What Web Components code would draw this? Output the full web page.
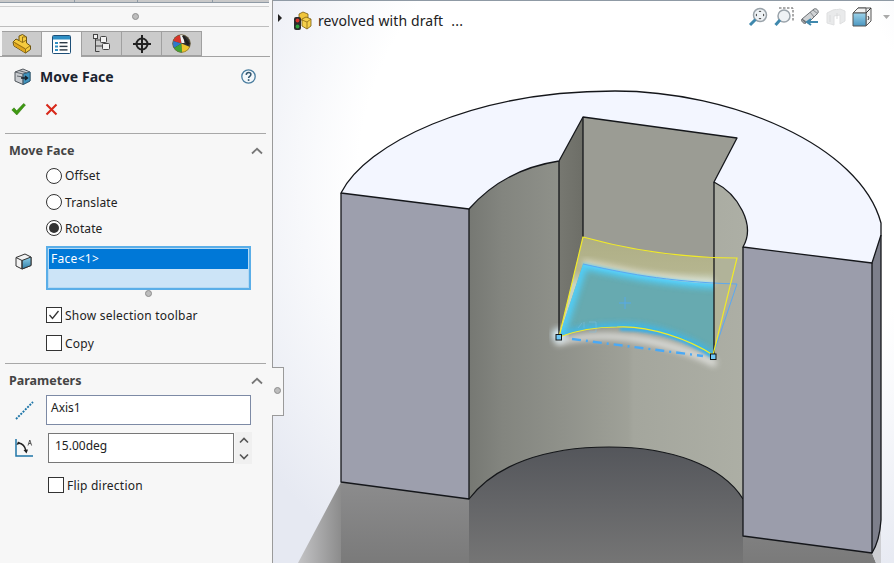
<!DOCTYPE html>
<html>
<head>
<meta charset="utf-8">
<title>Move Face</title>
<style>
  html, body { margin: 0; height: 100%; overflow: hidden; background: #fff; }
  body { font-family: "Noto Sans", "Open Sans", sans-serif; font-size: 12px; color: #222; }
</style>
</head>
<body>
<cad-app>
  <pm-panel slot="panel">
    <pm-tabs></pm-tabs>
    <pm-header title="Move Face"></pm-header>
    <pm-group title="Move Face" style="height:229px">
      <pm-radio label="Offset" style="margin-left:46px;height:27px"></pm-radio>
      <pm-radio label="Translate" style="margin-left:46px;height:26px"></pm-radio>
      <pm-radio label="Rotate" checked style="margin-left:46px;height:31px;align-items:flex-start;padding-top:5px;box-sizing:border-box"></pm-radio>
      <pm-listbox value="Face&lt;1&gt;"></pm-listbox>
      <pm-check label="Show selection toolbar" checked style="margin:11px 0 0 46px;height:28px"></pm-check>
      <pm-check label="Copy" style="margin-left:46px;height:28px"></pm-check>
    </pm-group>
    <pm-group title="Parameters" plain>
      <pm-field icon="axis" value="Axis1"></pm-field>
      <pm-spin value="15.00deg"></pm-spin>
      <pm-check label="Flip direction" style="margin:13px 0 0 48px;height:18px"></pm-check>
    </pm-group>
    <pm-flyout></pm-flyout>
  </pm-panel>
  <cad-view slot="view">
    <cad-crumb name="revolved with draft"></cad-crumb>
    <cad-tools></cad-tools>
  </cad-view>
</cad-app>

<script>
class CadApp extends HTMLElement {
  constructor() {
    super();
    this.attachShadow({ mode: 'open' });
    this.shadowRoot.innerHTML = `
      <style>
        :host { display: flex; width: 894px; height: 563px; overflow: hidden; }
        ::slotted([slot=panel]) { flex: 0 0 272px; }
        ::slotted([slot=view]) { flex: 1; }
      </style>
      <slot name="panel"></slot>
      <slot name="view"></slot>
    `;
  }
}

class PmPanel extends HTMLElement {
  constructor() {
    super();
    this.attachShadow({ mode: 'open' });
    this.shadowRoot.innerHTML = `
      <style>
        :host {
          display: flex; flex-direction: column; position: relative; box-sizing: content-box;
          background: #f7f7f7; border-right: 1px solid #9a9a9a; z-index: 2;
        }
        .top { height: 27px; box-sizing: border-box; border-bottom: 1px solid #bdbdbd; margin-right: 3px; position: relative; }
        .edge { height: 2px; background: #c9c9c9; border-bottom: 1px solid #8f9aa5; display: flex; }
        .edge i { width: 1px; background: #8f9aa5; margin-left: 74px; }
        .edge i + i { margin-left: 62px; }
        .edge i + i + i { margin-left: 74px; }
        .rule { height: 1px; background: #cfcfcf; margin-top: 3px; }
        .dot {
          width: 5px; height: 5px; border-radius: 50%; background: #bdbdbd; border: 1px solid #8e8e8e;
          position: absolute; left: 132px; top: 13px;
        }
      </style>
      <div class="top">
        <div class="edge"><i></i><i></i><i></i></div>
        <div class="rule"></div>
        <div class="dot"></div>
      </div>
      <slot></slot>
    `;
  }
}

class PmTabs extends HTMLElement {
  constructor() {
    super();
    this.attachShadow({ mode: 'open' });
    this.shadowRoot.innerHTML = `
      <style>
        :host {
          display: flex; height: 26px; margin-top: 4px; padding-left: 2px; margin-right: 2px;
          box-sizing: border-box; border-bottom: 1px solid #a3a3a3;
        }
        .tab {
          width: 40px; height: 25px; box-sizing: border-box; background: #cbcbcb;
          border: 1px solid #a0a0a0; border-left-width: 0;
          display: flex; align-items: center; justify-content: center;
        }
        .tab:first-child { border-left-width: 1px; }
        .tab.on { background: #f7f7f7; height: 26px; border-bottom: 0; border-right-color: #a0a0a0; }
        svg { display: block; }
      </style>
      <div class="tab">
        <svg width="20" height="20" viewBox="0 0 20 20">
          <path d="M1 8 4 5l3 1.500V2L10.500 .5 14.500 3v6l4 3v3.500L13.500 19 2 12z" fill="#f5cb3e" stroke="#6e5510" stroke-width="1"/>
          <path d="M2 11.500 13 18.500V14L3 8z" fill="#e0a51c"/>
          <path d="M1.500 8 13.500 15l5-3.500M13.500 15v4M7 6.500l3.500 2 4-2.500M10.500 8.500V3M10.500 3l4-.2" fill="none" stroke="#8a6a14" stroke-width=".9"/>
        </svg>
      </div>
      <div class="tab on">
        <svg width="19" height="19" viewBox="0 0 19 19">
          <rect x=".5" y=".5" width="18" height="18" rx="1" fill="#fff" stroke="#1d4f78"/>
          <rect x="1" y="1" width="17" height="3.500" fill="#2f8fc4"/>
          <g fill="#2f8fc4"><rect x="3" y="7" width="3" height="2"/><rect x="3" y="10.500" width="3" height="2"/><rect x="3" y="14" width="3" height="2"/></g>
          <g fill="#2c3a46"><rect x="7.500" y="7" width="8" height="1.400"/><rect x="7.500" y="10.700" width="8" height="1.400"/><rect x="7.500" y="14.200" width="8" height="1.400"/></g>
        </svg>
      </div>
      <div class="tab">
        <svg width="18" height="20" viewBox="0 0 18 20" fill="#f2f2f2" stroke="#444" stroke-width="1">
          <path d="M2.500 1.500v16M2.500 6h5M2.500 12H9M2.500 17.500h4" fill="none"/>
          <rect x=".5" y=".5" width="4" height="4"/>
          <rect x="7.500" y="2.500" width="6" height="6" rx="1"/>
          <rect x="9.500" y="9.500" width="7" height="6" rx="1"/>
        </svg>
      </div>
      <div class="tab">
        <svg width="18" height="18" viewBox="0 0 18 18" fill="none" stroke="#222" stroke-width="2">
          <circle cx="9" cy="9" r="5.500"/>
          <path d="M9 0v18M0 9h18"/>
        </svg>
      </div>
      <div class="tab">
        <svg width="19" height="19" viewBox="0 0 19 19">
          <circle cx="9.500" cy="9.500" r="9" fill="#333"/>
          <path d="M9.500 9.500 1 7a9 9 0 0 1 7-6z" fill="#d9342a"/>
          <path d="M9.500 9.500 1 7a9 9 0 0 0 1 7z" fill="#2f79c9"/>
          <path d="M9.500 9.500 2 14a9 9 0 0 0 8 4.500z" fill="#3fa535"/>
          <path d="M9.500 9.500l.5 9a9 9 0 0 0 8-5.500z" fill="#edc52c"/>
          <path d="M8 1a9 9 0 0 1 3 0l1.500 8H9.500z" fill="#f2f2f2"/>
          <path d="M11.500 1 18 10l-3 1-5-9z" fill="#1f1f1f"/>
          <circle cx="9.500" cy="9.500" r="8.800" fill="none" stroke="#7a6a3a" stroke-width=".6"/>
        </svg>
      </div>
    `;
  }
}

class PmHeader extends HTMLElement {
  constructor() {
    super();
    this.attachShadow({ mode: 'open' });
    this.shadowRoot.innerHTML = `
      <style>
        :host {
          display: block; height: 77px; margin: 0 6px 0 5px; box-sizing: border-box;
          border-bottom: 1px solid #a8a8a8;
        }
        .title { display: flex; align-items: center; height: 22px; margin-top: 8px; padding-left: 9px; }
        .name { font-weight: 700; font-size: 14px; color: #1b2430; margin-left: 9px; flex: 1; letter-spacing: .05px; }
        .help { margin-right: 10px; display: block; }
        .actions { display: flex; gap: 19px; margin-top: 16px; padding-left: 6px; }
        svg { display: block; }
      </style>
      <div class="title">
        <svg width="17" height="17" viewBox="0 0 17 17">
          <path d="M1 4 9 1l7 3v9l-7 3.500L1 13z" fill="#c9ccd0" stroke="#50565c"/>
          <path d="M9 6l7-2v9l-7 3.500z" fill="#3f93bd" stroke="#2c5f7c"/>
          <path d="M1 4l8 2v10.500M5 2.500l8 2.500M3 8l6 1" fill="none" stroke="#60666c"/>
          <path d="M7 10h6M11 8l2.500 2-2.500 2" fill="none" stroke="#16202a" stroke-width="1.400"/>
        </svg>
        <span class="name"></span>
        <svg class="help" width="15" height="15" viewBox="0 0 15 15">
          <circle cx="7.500" cy="7.500" r="6.700" fill="#f4f8fb" stroke="#4a7d9f" stroke-width="1.300"/>
          <path d="M5.200 5.800c.2-1.500 1.200-2.200 2.400-2.200 1.400 0 2.300.9 2.300 2 0 1.700-2.300 1.700-2.300 3.400" fill="none" stroke="#33566e" stroke-width="1.500"/>
          <rect x="6.800" y="10.200" width="1.600" height="1.700" fill="#33566e"/>
        </svg>
      </div>
      <div class="actions">
        <svg width="15" height="13" viewBox="0 0 15 13"><path d="M.8 7 3 4.800l2.700 3L12.600.5 14.500 2 5.800 12z" fill="#3f9a12" stroke="#2a7208" stroke-width=".5"/></svg>
        <svg width="13" height="13" viewBox="0 0 13 13"><path d="M1.500 1.500l10 10M11.500 1.500l-10 10" stroke="#d8281a" stroke-width="2.100" fill="none"/></svg>
      </div>
    `;
    this.shadowRoot.querySelector('.name').textContent = this.getAttribute('title');
  }
}

class PmGroup extends HTMLElement {
  constructor() {
    super();
    this.attachShadow({ mode: 'open' });
    this.shadowRoot.innerHTML = `
      <style>
        :host { display: block; }
        .head {
          display: flex; align-items: center; justify-content: space-between; height: 33px;
          padding: 0 9px;
          font-weight: 700; font-size: 12.500px; color: #444;
        }
        .body { display: block; margin-top: -5px; }
        :host(:not([plain])) { border-bottom: 1px solid #a8a8a8; margin: 0 6px 0 5px; }
        :host(:not([plain])) .head { padding: 0 3px 0 4px; }
        :host(:not([plain])) .body { margin-left: -5px; }
        :host([plain]) .body { margin-top: -4px; }
        svg { display: block; }
      </style>
      <div class="head">
        <span class="t"></span>
        <svg width="12" height="8" viewBox="0 0 12 8"><path d="M1 6.500 6 1.800l5 4.700" fill="none" stroke="#777" stroke-width="1.800"/></svg>
      </div>
      <div class="body"><slot></slot></div>
    `;
    this.shadowRoot.querySelector('.t').textContent = this.getAttribute('title');
  }
}

class PmRadio extends HTMLElement {
  constructor() {
    super();
    this.attachShadow({ mode: 'open' });
    this.shadowRoot.innerHTML = `
      <style>
        :host { display: flex; align-items: center; gap: 3px; font-size: 12px; color: #222; letter-spacing: .1px; }
        .r { width: 16px; height: 16px; box-sizing: border-box; border: 1px solid #333; border-radius: 50%; background: #fff; display: flex; align-items: center; justify-content: center; }
        :host([checked]) .r::after { content: ''; width: 10px; height: 10px; border-radius: 50%; background: #333; }
      </style>
      <span class="r"></span><span class="l"></span>
    `;
    this.shadowRoot.querySelector('.l').textContent = this.getAttribute('label');
  }
}

class PmCheck extends HTMLElement {
  constructor() {
    super();
    this.attachShadow({ mode: 'open' });
    this.shadowRoot.innerHTML = `
      <style>
        :host { display: flex; align-items: center; gap: 3px; font-size: 12px; color: #222; letter-spacing: .22px; }
        .c { width: 16px; height: 16px; box-sizing: border-box; border: 1px solid #333; background: #fff; display: block; }
        svg { display: block; }
      </style>
      <span class="c"></span><span class="l"></span>
    `;
    this.shadowRoot.querySelector('.l').textContent = this.getAttribute('label');
    if (this.hasAttribute('checked')) {
      this.shadowRoot.querySelector('.c').innerHTML = '<svg width="14" height="14" viewBox="0 0 14 14"><path d="M2.500 7 5.500 10.500 11.500 3" fill="none" stroke="#333" stroke-width="1.300"/></svg>';
    }
  }
}

class PmListbox extends HTMLElement {
  constructor() {
    super();
    this.attachShadow({ mode: 'open' });
    this.shadowRoot.innerHTML = `
      <style>
        :host { display: flex; position: relative; padding-left: 15px; height: 44px; }
        .ico { width: 31px; padding-top: 7px; }
        .box {
          width: 205px; height: 44px; box-sizing: border-box; border: 2px solid #5aaee8;
          padding: 1px; background: #cce4f7; box-shadow: inset 0 0 0 1px #b5d9f3;
        }
        .sel { height: 20px; line-height: 19px; background: #0078d7; color: #fff; padding-left: 2px; font-size: 12px; letter-spacing: .3px; }
        .dot {
          width: 5px; height: 5px; border-radius: 50%; background: #bdbdbd; border: 1px solid #8e8e8e;
          position: absolute; left: 145px; top: 44px;
        }
        svg { display: block; }
      </style>
      <div class="ico">
        <svg width="17" height="17" viewBox="0 0 17 17">
          <defs><linearGradient id="f" x1="0" y1="0" x2="0" y2="1"><stop offset="0" stop-color="#8fd0ea"/><stop offset="1" stop-color="#2f7ea8"/></linearGradient></defs>
          <path d="M1 4.500 10 1l6 3v8.500L7 16l-6-3z" fill="#f2f2f2" stroke="#333"/>
          <path d="M7 7.500l9-3.500v8.500L7 16z" fill="url(#f)" stroke="#333"/>
          <path d="M1 4.500l6 3V16" fill="none" stroke="#333"/>
        </svg>
      </div>
      <div class="box"><div class="sel"></div></div>
      <span class="dot"></span>
    `;
    this.shadowRoot.querySelector('.sel').textContent = this.getAttribute('value');
  }
}

class PmField extends HTMLElement {
  constructor() {
    super();
    this.attachShadow({ mode: 'open' });
    this.shadowRoot.innerHTML = `
      <style>
        :host { display: flex; align-items: center; height: 30px; padding-left: 15px; margin-top: 2px; }
        .ico { width: 31px; }
        .in {
          width: 205px; height: 30px; box-sizing: border-box; background: #fff; border: 1px solid #7d8aa5;
          padding: 3px 0 0 4px; font-size: 12px; line-height: 18px; color: #222;
        }
        svg { display: block; }
      </style>
      <div class="ico">
        <svg width="19" height="19" viewBox="0 0 19 19"><path d="M1 18 18 1" stroke="#1f76a8" stroke-width="1.900" stroke-dasharray="2 1.200" fill="none"/></svg>
      </div>
      <div class="in"></div>
    `;
    this.shadowRoot.querySelector('.in').textContent = this.getAttribute('value');
  }
}

class PmSpin extends HTMLElement {
  constructor() {
    super();
    this.attachShadow({ mode: 'open' });
    this.shadowRoot.innerHTML = `
      <style>
        :host { display: flex; align-items: center; height: 30px; padding-left: 15px; margin-top: 8px; }
        .ico { width: 33px; }
        .in {
          width: 186px; height: 30px; box-sizing: border-box; background: #fff; border: 1px solid #777;
          padding: 3px 0 0 6px; font-size: 12px; line-height: 18px; color: #222;
        }
        .sp {
          width: 17px; height: 32px; margin-left: 1px; background: #f0f0f0;
          display: flex; flex-direction: column; align-items: center; justify-content: space-around;
        }
        svg { display: block; }
      </style>
      <div class="ico">
        <svg width="19" height="20" viewBox="0 0 19 20" fill="none">
          <path d="M1 1v17h17" stroke="#1f76a8" stroke-width="1.500"/>
          <path d="M3.500 5c4 .5 6.500 3 7.500 8" stroke="#222" stroke-width="1.500"/>
          <path d="M1.500 7 3 3.500 6 5.500zM8.500 12l4.500-.5-1.500 4z" fill="#222"/>
          <path d="M13 7.500 14.800 2l1.800 5.500M13.800 5.500h2" stroke="#444" stroke-width=".9"/>
        </svg>
      </div>
      <div class="in"></div>
      <div class="sp">
        <svg width="10" height="7" viewBox="0 0 10 7"><path d="M1 5.500 5 1.500l4 4" fill="none" stroke="#555" stroke-width="1.600"/></svg>
        <svg width="10" height="7" viewBox="0 0 10 7"><path d="M1 1.500 5 5.500l4-4" fill="none" stroke="#555" stroke-width="1.600"/></svg>
      </div>
    `;
    this.shadowRoot.querySelector('.in').textContent = this.getAttribute('value');
  }
}

class PmFlyout extends HTMLElement {
  constructor() {
    super();
    this.attachShadow({ mode: 'open' });
    this.shadowRoot.innerHTML = `
      <style>
        :host {
          position: absolute; left: 272px; top: 367px; width: 11px; height: 47px;
          background: #f7f7f7; border: 1px solid #9a9a9a; border-left: 0; box-sizing: content-box;
        }
        i { position: absolute; left: 2px; top: 19px; width: 5px; height: 5px; border-radius: 50%; background: #bdbdbd; border: 1px solid #8e8e8e; }
      </style>
      <i></i>
    `;
  }
}

const TOP_FACE = 'M341 193C365 145 470 91 615 91 730 91 860 145 881 223V235L872 263 743 247C756 225 738 194 714 182L737 138 583 117 559 161C520 167 490 185 469 209z';
const LOWER = 'C690 340 650 325 617 327 595 327 575 331 559 337';

class CadView extends HTMLElement {
  constructor() {
    super();
    this.attachShadow({ mode: 'open' });
    this.shadowRoot.innerHTML = `
      <style>
        :host { display: block; position: relative; overflow: hidden; background: #fff; }
        .edge { position: absolute; left: 0; right: 0; top: 0; height: 1px; background: #8f9aa5; z-index: 1; }
        svg.scene { display: block; width: 621px; height: 563px; }
      </style>
      <svg class="scene" viewBox="273 0 621 563">
        <defs>
          <radialGradient id="bg" cx="640" cy="180" r="470" gradientUnits="userSpaceOnUse">
            <stop offset=".6" stop-color="#ffffff"/><stop offset="1" stop-color="#e6e9f2"/>
          </radialGradient>
          <linearGradient id="shadeL" x1="298" y1="0" x2="341" y2="0" gradientUnits="userSpaceOnUse">
            <stop offset="0" stop-color="#c4c4c6"/><stop offset="1" stop-color="#8c8c8c"/>
          </linearGradient>
          <linearGradient id="shadeM" x1="0" y1="482" x2="0" y2="563" gradientUnits="userSpaceOnUse">
            <stop offset="0" stop-color="#8c8c8d"/><stop offset="1" stop-color="#7a7a7a"/>
          </linearGradient>
          <linearGradient id="hole" x1="0" y1="447" x2="0" y2="563" gradientUnits="userSpaceOnUse">
            <stop offset="0" stop-color="#54565b"/><stop offset="1" stop-color="#757575"/>
          </linearGradient>
          <linearGradient id="cyl" x1="469" y1="0" x2="748" y2="0" gradientUnits="userSpaceOnUse">
            <stop offset="0" stop-color="#767873"/><stop offset=".12" stop-color="#83857f"/>
            <stop offset=".33" stop-color="#8f918a"/><stop offset=".57" stop-color="#9fa198"/>
            <stop offset=".59" stop-color="#a4a69d"/><stop offset="1" stop-color="#adafa5"/>
          </linearGradient>
          <linearGradient id="slotL" x1="559" y1="0" x2="583" y2="0" gradientUnits="userSpaceOnUse">
            <stop offset="0" stop-color="#777871"/><stop offset="1" stop-color="#6d6e67"/>
          </linearGradient>
          <linearGradient id="ghost" x1="0" y1="237" x2="0" y2="285" gradientUnits="userSpaceOnUse">
            <stop offset="0" stop-color="#aeae84"/><stop offset=".7" stop-color="#b5b58f"/><stop offset="1" stop-color="#c8d4c0"/>
          </linearGradient>
          <clipPath id="face"><path d="M583 264C620 272 665 282 714 284V357${LOWER}z"/></clipPath>
          <filter id="b3" x="-20%" y="-30%" width="140%" height="160%"><feGaussianBlur stdDeviation="3"/></filter>
          <filter id="b1" x="-20%" y="-30%" width="140%" height="160%"><feGaussianBlur stdDeviation="1.500"/></filter>
        </defs>

        <rect x="273" y="0" width="621" height="563" fill="url(#bg)"/>

        <!-- floor shadow -->
        <path d="M341 482 298 563H341z" fill="url(#shadeL)"/>
        <path d="M341 482 469 499 743 499V536L872 553 876 563H341z" fill="url(#shadeM)"/>
        <path d="M872 553 881 520V563H876z" fill="#cdced2"/>

        <!-- bore -->
        <path d="M469 209C490 185 520 167 559 161L714 182C738 194 756 225 743 247V499H469z" fill="url(#cyl)"/>
        <path d="M469 499C495 465 545 447 609 447 670 447 722 465 743 499V563H469z" fill="url(#hole)"/>
        <path d="M469 499C495 465 545 447 609 447 670 447 722 465 743 499" fill="none" stroke="#15171a" stroke-width="1.200"/>

        <!-- slot walls -->
        <path d="M559 161 583 117V237L559 337z" fill="url(#slotL)"/>
        <path d="M583 117 737 138 714 182V357${LOWER}L583 237z" fill="#9b9c94"/>

        <!-- top face -->
        <path d="${TOP_FACE}" fill="#f3f6ff"/>

        <!-- outer faces -->
        <path d="M341 193 469 209V499L341 482z" fill="#9d9fad"/>
        <path d="M743 247 872 263V553L743 536z" fill="#9b9dab"/>
        <path d="M872 263 881 235V520C880 535 877 545 872 553z" fill="#7d7f8b"/>

        <!-- face preview and glow -->
        <path d="M583 237C630 250 680 258 714 258V357${LOWER}z" fill="url(#ghost)"/>
        <path d="M714 258H737L713 355z" fill="#b4b594" opacity=".7"/>
        <path d="M556 343C590 332 650 332 716 364" fill="none" stroke="#ffffff" stroke-width="6" filter="url(#b3)" opacity=".7"/>
        <circle cx="559" cy="335" r="7" fill="#dff4ff" filter="url(#b3)"/>
        <path d="M583 262C620 270 665 280 714 282" fill="none" stroke="#ffffff" stroke-width="4" filter="url(#b3)" opacity=".7"/>
        <path d="M583 264C620 272 665 282 714 284V357${LOWER}z" fill="#67aab0"/>
        <g clip-path="url(#face)">
          <path d="M559 337 583 264C620 272 665 282 722 284" fill="none" stroke="#4fd2ff" stroke-width="10" filter="url(#b3)" opacity=".9"/>
          <path d="M559 337${'C'}575 331 595 327 617 327 650 325 690 340 714 357" fill="none" stroke="#35bdfb" stroke-width="7" filter="url(#b3)" opacity=".85"/>
        </g>
        <path d="M583 264C620 272 665 282 714 284" fill="none" stroke="#5fd3ff" stroke-width="2" filter="url(#b1)"/>
        <path d="M620 328C655 327 690 340 713 356" fill="none" stroke="#1fb0fb" stroke-width="3" filter="url(#b1)" transform="translate(0 1)"/>
        <path d="M583 264C620 272 665 282 737 284L713 355" fill="none" stroke="#5aa9f2" stroke-width="1"/>
        <path d="M625 297v12M619 303h12" stroke="#57a9e8" stroke-width="1" fill="none"/>
        <path d="M578 328l4-5M584 328v-6M589 322h7v10h-7" fill="none" stroke="#7cc0e8" stroke-width=".7" opacity=".7"/>
        <path d="M572 339 703 356" stroke="#4aa9f5" stroke-width="2.400" stroke-dasharray="9 5 2 5" fill="none"/>

        <!-- edges -->
        <g fill="none" stroke="#14161a" stroke-width="1.300" stroke-linejoin="round">
          <path d="${TOP_FACE}"/>
          <path d="M341 193V482L469 499V209"/>
          <path d="M743 247V536L872 553V263"/>
          <path d="M881 235V520C880 535 877 545 872 553"/>
          <path d="M559 161V337M714 182V357M583 117V237"/>
        </g>

        <!-- yellow outline -->
        <path d="M559 337 583 237C630 250 680 258 737 258L713 355${LOWER}z" fill="none" stroke="#f0ea2a" stroke-width="1.200"/>
        <rect x="556" y="334.500" width="5.500" height="5.500" fill="#6fc8f8" stroke="#111" stroke-width="1"/>
        <rect x="710.500" y="354" width="5.500" height="5.500" fill="#6fc8f8" stroke="#111" stroke-width="1"/>
      </svg>
      <div class="edge"></div>
      <slot></slot>
    `;
  }
}

class CadCrumb extends HTMLElement {
  constructor() {
    super();
    this.attachShadow({ mode: 'open' });
    this.shadowRoot.innerHTML = `
      <style>
        :host {
          position: absolute; left: 5px; top: 9px; height: 22px; display: flex; align-items: center;
          font-size: 14px; color: #222; white-space: nowrap;
        }
        .arrow { width: 0; height: 0; border-left: 4px solid #222; border-top: 4px solid transparent; border-bottom: 4px solid transparent; margin: -5px 12px 0 0; }
        .name { margin-left: 5px; letter-spacing: .1px; }
        .more { margin-left: 8px; letter-spacing: .2px; }
        svg { display: block; }
      </style>
      <span class="arrow"></span>
      <svg width="19" height="19" viewBox="0 0 19 19">
        <path d="M5 3 9 1l5 2v5l-4 2-5-2z" fill="#f0c53a" stroke="#7a5d12" stroke-width=".8"/>
        <path d="M8 8l4-2 5 2v7l-4 3-5-3z" fill="#f5d04a" stroke="#7a5d12" stroke-width=".8"/>
        <path d="M8 9l5 2v7M13 11l4-3" fill="none" stroke="#8a6a14" stroke-width=".8"/>
        <rect x="0" y="6" width="7" height="13" rx="2" fill="#2b2b2b"/>
        <circle cx="3.500" cy="9.500" r="1.900" fill="#d9342a"/>
        <circle cx="3.500" cy="15.500" r="1.900" fill="#2fa13a"/>
      </svg>
      <span class="name"></span>
      <span class="more">...</span>
    `;
    this.shadowRoot.querySelector('.name').textContent = this.getAttribute('name');
  }
}

class CadTools extends HTMLElement {
  constructor() {
    super();
    this.attachShadow({ mode: 'open' });
    this.shadowRoot.innerHTML = `
      <style>
        :host { position: absolute; left: 475px; top: 7px; display: flex; align-items: center; gap: 6px; }
        svg { display: block; }
        .sep { width: 1px; height: 12px; background: #999; margin-left: 7px; }
      </style>
      <svg width="20" height="20" viewBox="0 0 20 20">
        <circle cx="12" cy="8" r="6.500" fill="#eef2f5" stroke="#9aa3aa" stroke-width="1.500"/>
        <path d="M7.500 12.500 2 18" stroke="#3f88ad" stroke-width="3"/>
        <path d="M12 3.500l1.500 1.500h-3zM12 12.500 10.500 11h3zM7.500 8 9 6.500v3zM16.500 8 15 6.500v3z" fill="#444"/>
      </svg>
      <svg width="20" height="20" viewBox="0 0 20 20">
        <path d="M5 1h14v13" fill="none" stroke="#555" stroke-dasharray="2.500 1.500"/>
        <circle cx="10" cy="9" r="6" fill="#eef2f5" stroke="#9aa3aa" stroke-width="1.500"/>
        <path d="M6 13 1.500 18" stroke="#3f88ad" stroke-width="3"/>
      </svg>
      <svg width="20" height="20" viewBox="0 0 20 20">
        <path d="M2 12 14 2c2-1 5 1 4 4L8 16z" fill="#cfd2d4" stroke="#6c7074"/>
        <path d="M13 3l5 4M10 5l4 5" fill="none" stroke="#84888c"/>
        <path d="M2 12c-2 1 2 6 4 4z" fill="#9ea2a6" stroke="#6c7074"/>
        <path d="M18 15H8M11 12l-4 3 4 3" fill="none" stroke="#3f88ad" stroke-width="2"/>
      </svg>
      <svg width="20" height="20" viewBox="0 0 20 20" opacity=".55">
        <path d="M1 6 7 3c3-1 4 0 7-1l5 2v10l-5 3V8L8 9v9l-7-2z" fill="#d8dadb" stroke="#c4c6c8"/>
        <path d="M4 8v7M11 6v6" fill="none" stroke="#bbbdbf"/>
      </svg>
      <svg width="20" height="20" viewBox="0 0 20 20">
        <defs><linearGradient id="c" x1="0" y1="0" x2="0" y2="1"><stop offset="0" stop-color="#9dd3ea"/><stop offset="1" stop-color="#4a96c0"/></linearGradient></defs>
        <path d="M6 1h13v13l-5 5V6z" fill="#f1f1f1" stroke="#555"/>
        <path d="M1 6 6 1h8l-0 5z" fill="#f1f1f1" stroke="#555"/>
        <path d="M1 6h13v13H1z" fill="url(#c)" stroke="#555"/>
        <path d="M14 6l5-5M16 9l1 2-1 2" fill="none" stroke="#333"/>
      </svg>
      <svg width="7" height="5" viewBox="0 0 7 5" style="margin-left:5px"><path d="M0 0h7L3.500 4z" fill="#aaa"/></svg>
      <span class="sep"></span>
    `;
  }
}

customElements.define('cad-app', CadApp);
customElements.define('pm-panel', PmPanel);
customElements.define('pm-tabs', PmTabs);
customElements.define('pm-header', PmHeader);
customElements.define('pm-group', PmGroup);
customElements.define('pm-radio', PmRadio);
customElements.define('pm-check', PmCheck);
customElements.define('pm-listbox', PmListbox);
customElements.define('pm-field', PmField);
customElements.define('pm-spin', PmSpin);
customElements.define('pm-flyout', PmFlyout);
customElements.define('cad-view', CadView);
customElements.define('cad-crumb', CadCrumb);
customElements.define('cad-tools', CadTools);
</script>
</body>
</html>
